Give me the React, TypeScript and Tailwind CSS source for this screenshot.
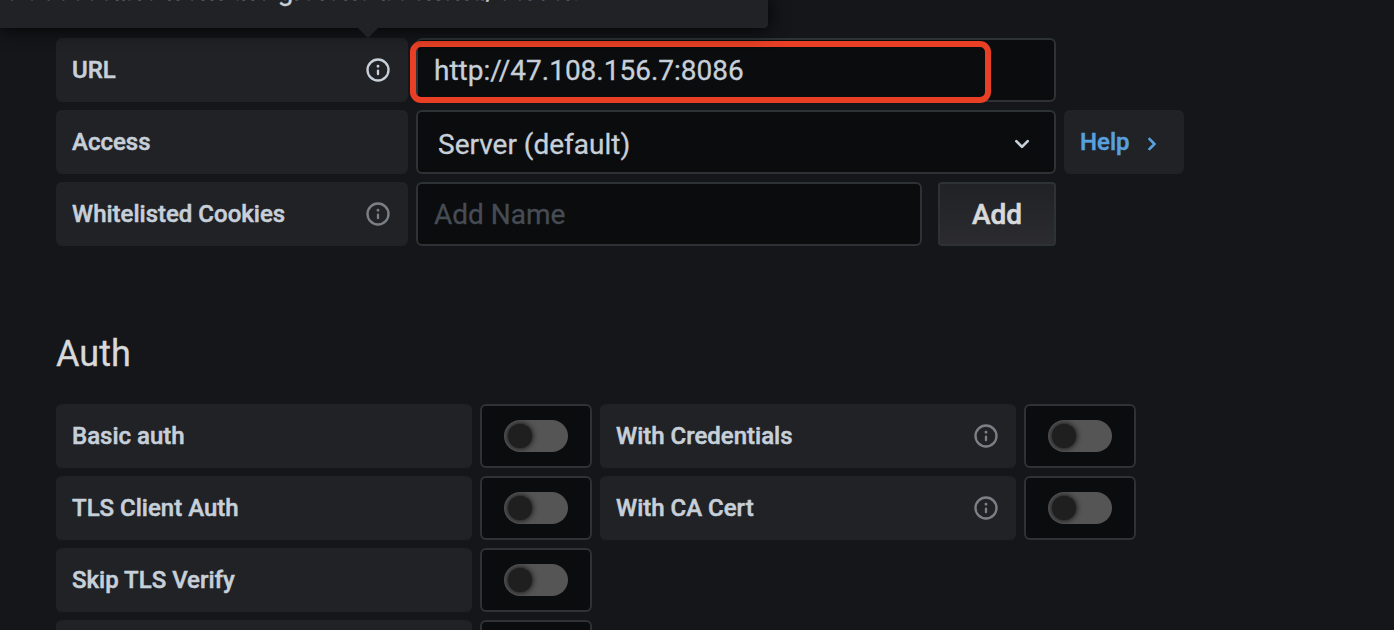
import React from "react";

function InfoIcon({ className = "" }: { className?: string }) {
  return (
    <svg viewBox="0 0 24 24" className={`size-7 shrink-0 ${className}`} fill="currentColor">
      <path d="M12,2A10,10,0,1,0,22,12,10.01114,10.01114,0,0,0,12,2Zm0,18a8,8,0,1,1,8-8A8.00917,8.00917,0,0,1,12,20Zm0-8.5a1,1,0,0,0-1,1v3a1,1,0,0,0,2,0v-3A1,1,0,0,0,12,11.5Zm0-4a1.25,1.25,0,1,0,1.25,1.25A1.25,1.25,0,0,0,12,7.5Z" />
    </svg>
  );
}

function Label({ text, width, info }: { text: string; width: string; info?: string }) {
  return (
    <div className={`flex h-16 shrink-0 items-center justify-between rounded-md bg-[#202226] px-4 text-2xl font-medium text-[#c7d0d9] [-webkit-text-stroke:0.5px] ${width}`}>
      <span>{text}</span>
      {info && <InfoIcon className={info} />}
    </div>
  );
}

function Toggle() {
  return (
    <div className="flex h-16 w-28 shrink-0 items-center justify-center rounded-md border-2 border-[#2c3235] bg-[#0b0c0e]">
      <div className="flex h-8 w-16 items-center overflow-hidden rounded-full bg-[#555555] pl-1">
        <div className="size-6 rounded-full bg-[#1f1f1f] shadow-[0_0_6px_#000000]" />
      </div>
    </div>
  );
}

const field = "rounded-md border-2 border-[#2c3235] bg-[#0b0c0e]";

export default function App() {
  return (
    <main className="relative h-[630px] w-[1394px] overflow-hidden bg-[#15161a] pl-14 pt-[38px] font-['Roboto',sans-serif]">
      <section className="flex flex-col gap-2">
        <div className="flex gap-2">
          <Label text="URL" width="w-[352px]" info="text-[#c7d0d9]" />
          <div className={`relative flex h-16 w-[640px] items-center pl-4 text-[28px] text-[#c7d0d9] [-webkit-text-stroke:0.3px] ${field}`}>
            <span className="pt-0.5">http://47.108.156.7:8086</span>
            <div className="absolute -left-2 top-px h-[62px] w-[581px] rounded-[11px] border-6 border-[#e94025]" />
          </div>
        </div>
        <div className="flex gap-2">
          <Label text="Access" width="w-[352px]" />
          <div className={`flex h-16 w-[640px] items-center justify-between pl-5 pr-4 text-[28px] text-[#c7d0d9] [-webkit-text-stroke:0.3px] ${field}`}>
            <span className="pt-1.5">Server (default)</span>
            <svg viewBox="0 0 24 24" className="mt-1 size-8" fill="currentColor">
              <path d="M17,9.17a1,1,0,0,0-1.41,0L12,12.71,8.46,9.17a1,1,0,0,0-1.41,0,1,1,0,0,0,0,1.42l4.24,4.24a1,1,0,0,0,1.42,0L17,10.59A1,1,0,0,0,17,9.17Z" />
            </svg>
          </div>
          <div className="flex h-16 w-[120px] items-center rounded-md bg-[#202226] pl-4 text-2xl font-medium text-[#58a0df] [-webkit-text-stroke:0.5px]">
            <span>Help</span>
            <svg viewBox="0 0 24 24" className="ml-2 mt-1 size-7" fill="currentColor" stroke="currentColor" strokeWidth="0.5">
              <path d="M14.83,11.29,10.59,7.05a1,1,0,0,0-1.42,0,1,1,0,0,0,0,1.41L12.71,12,9.17,15.54a1,1,0,0,0,0,1.41,1,1,0,0,0,.71.29,1,1,0,0,0,.71-.29l4.24-4.24A1,1,0,0,0,14.83,11.29Z" />
            </svg>
          </div>
        </div>
        <div className="flex gap-2">
          <Label text="Whitelisted Cookies" width="w-[352px]" info="text-[#7b8087]" />
          <div className={`flex h-16 w-[506px] items-center pl-4 pt-0.5 text-[28px] text-[#464c54] [-webkit-text-stroke:0.3px] ${field}`}>Add Name</div>
          <button className="ml-2 h-16 w-[118px] rounded-[4px] border-2 border-[#2c3235] bg-linear-to-b from-[#202226] to-[#2b2b30] pt-0.5 text-[28px] font-medium text-[#d8d9da] [-webkit-text-stroke:0.6px]">
            Add
          </button>
        </div>
      </section>

      <h3 className="mt-[84px] text-4xl/12 text-[#d8d9da] [-webkit-text-stroke:0.3px]">Auth</h3>

      <section className="mt-[26px] flex flex-col gap-2">
        <div className="flex gap-2">
          <Label text="Basic auth" width="w-[416px]" />
          <Toggle />
          <Label text="With Credentials" width="w-[416px]" info="text-[#7b8087]" />
          <Toggle />
        </div>
        <div className="flex gap-2">
          <Label text="TLS Client Auth" width="w-[416px]" />
          <Toggle />
          <Label text="With CA Cert" width="w-[416px]" info="text-[#7b8087]" />
          <Toggle />
        </div>
        <div className="flex gap-2">
          <Label text="Skip TLS Verify" width="w-[416px]" />
          <Toggle />
        </div>
        <div className="flex gap-2">
          <Label text="" width="w-[416px]" />
          <Toggle />
        </div>
      </section>

      <div className="absolute left-0 top-0 h-7 w-[768px] rounded-br-[4px] bg-[#202226] shadow-[0_0_20px_#000000]">
        <div className="flex h-7 items-start overflow-hidden text-[28px]/[40px] text-[#c7d0d9] [-webkit-text-stroke:0.3px]">
          <span className="-ml-[12px] -mt-[29px] whitespace-nowrap">be accessible from the grafana backend/server.</span>
        </div>
        <div className="absolute left-[358px] top-7 border-x-[10px] border-t-[10px] border-x-transparent border-t-[#202226]" />
      </div>
    </main>
  );
}
